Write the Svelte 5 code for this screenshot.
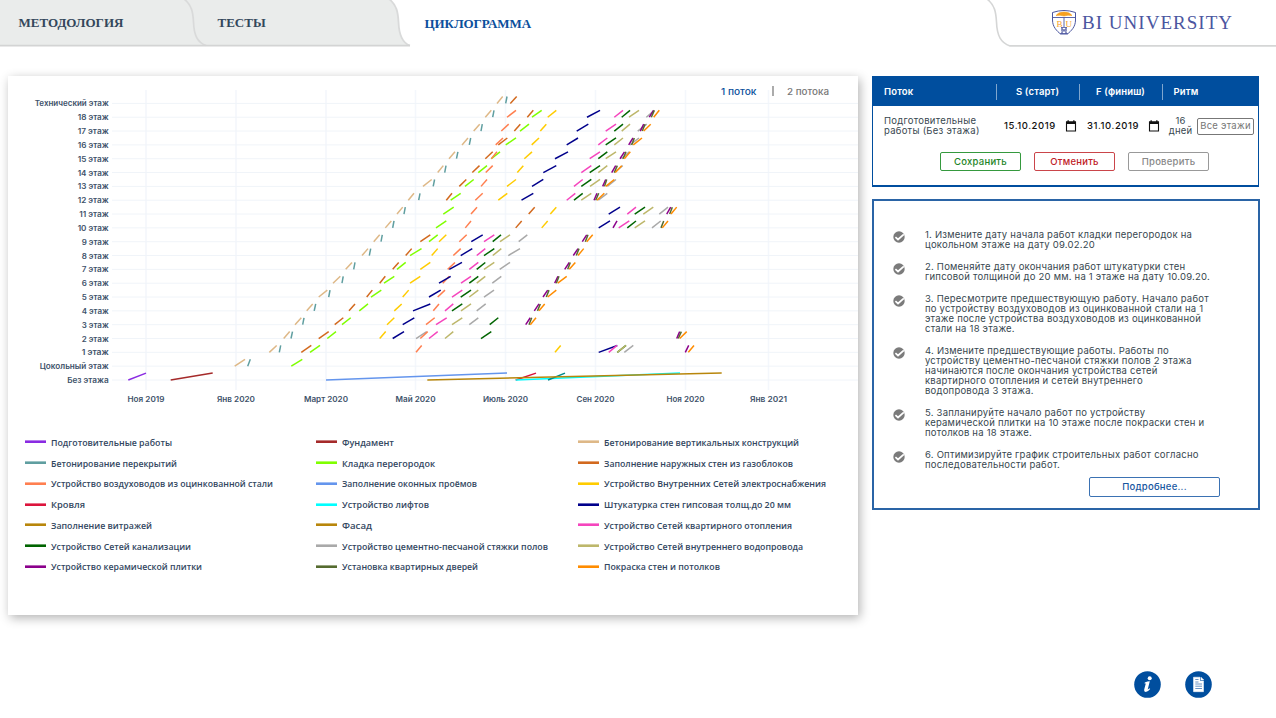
<script>
  const floors = ['Без этажа', 'Цокольный этаж', ...Array.from({ length: 18 }, (_, i) => `${i + 1} этаж`), 'Технический этаж'];
  const floorWidths = floors.map((f, i) => (i === 0 ? 41.5 : i === 1 ? 69 : i === 20 ? 74 : i < 11 ? 27 : i === 12 ? 29.5 : 31));
  const months = [
    ['Ноя 2019', 146], ['Янв 2020', 236], ['Март 2020', 326], ['Май 2020', 415.5],
    ['Июль 2020', 505.5], ['Сен 2020', 595.5], ['Ноя 2020', 685.5], ['Янв 2021', 768.5]
  ];
  const monthWidths = [37, 38, 44, 40, 45, 38, 38, 37];
  const rowY = (r) => 380 - r * 13.83;

  const series = [
    { color: '#8a2be2', s: [[0, 128.3, 146]] },
    { color: '#a52a2a', s: [[0, 170.7, 212.7]] },
    { color: '#deb887', s: [[1, 234.7, 245], [2, 269.3, 276.7], [3, 283.7, 289.7], [4, 295, 301.3], [5, 306.7, 312.7], [6, 318.7, 327.3], [7, 333, 340.3], [8, 345.7, 352], [9, 362, 368], [10, 373.7, 379.7], [11, 385.3, 391.3], [12, 397, 402.7], [13, 408.3, 414], [14, 423, 431.7], [15, 437.7, 443.3], [16, 449, 455], [17, 462, 468], [18, 473.7, 479.7], [19, 485.3, 491.3], [20, 497, 502.7]] },
    { color: '#5f9ea0', s: [[1, 247.7, 250.3], [2, 279.3, 280.7], [3, 291, 292.5], [4, 302.7, 304], [5, 314.2, 315.7], [6, 328.7, 330], [7, 342, 343.2], [8, 353.7, 355], [9, 369.3, 370.7], [10, 381, 382.3], [11, 392.7, 394], [12, 404, 405.3], [13, 418.7, 420], [14, 433.2, 434.6], [15, 444.7, 446], [16, 456.5, 457.9], [17, 469.3, 470.7], [18, 481, 482.3], [19, 492.7, 494], [20, 505.7, 507]] },
    { color: '#7fff00', s: [[1, 291.3, 302.3], [2, 310, 320], [3, 327.3, 336], [4, 342, 350.7], [5, 359.3, 368], [6, 371, 381.3], [7, 384, 394.3], [8, 397, 405.7], [9, 410, 421.5], [10, 429, 437.7], [11, 436, 446.3], [12, 443.3, 453.7], [13, 450.7, 460.7], [14, 465, 473.7], [15, 478.3, 487], [16, 491.3, 500], [17, 505.7, 516], [18, 520, 529], [19, 532, 541.7]] },
    { color: '#d2691e', s: [[2, 301.3, 311.3], [3, 318.7, 328.7], [4, 334.7, 343.3], [5, 349, 355], [6, 366.7, 372.3], [7, 379.7, 385.3], [8, 392.7, 398.7], [9, 405.7, 411.7], [10, 420.3, 430.3], [11, 515.7, 521.7], [12, 528.7, 534.7], [13, 446.3, 452], [14, 459.3, 466.3], [15, 472.3, 479.5], [16, 485.3, 492.7], [17, 498.3, 507.3], [18, 514.3, 520.3], [19, 527.3, 533.3], [20, 510.3, 516.7]] },
    { color: '#ff7f50', s: [[2, 416, 421.7], [4, 426, 434.7], [5, 433.3, 439], [6, 437.7, 445], [7, 442.7, 449.3], [8, 447.7, 455], [9, 453.3, 460.7], [10, 459.3, 466.7], [11, 465.3, 471], [12, 471, 477], [13, 475.3, 482.7], [14, 481, 487], [15, 485.7, 492.7], [16, 491.3, 497], [17, 495.7, 503], [18, 501.3, 508.7], [19, 507, 516]] },
    { color: '#6495ed', s: [[0, 326, 507]] },
    { color: '#ffcc00', s: [[2, 555, 560.7], [3, 379.7, 385.7], [4, 387, 394.3], [5, 394.3, 401.7], [6, 402.7, 408.7], [7, 410, 420.3], [8, 420.3, 430.3], [9, 431.7, 437.7], [10, 439, 446.3], [11, 541.7, 547.7], [12, 550.3, 556.3], [13, 498.3, 507.3], [14, 507, 516], [15, 517.3, 523.3], [16, 524.3, 532], [17, 531.7, 539], [18, 540.3, 546.3], [19, 547.7, 556.3]] },
    { color: '#dc143c', s: [[0, 515.7, 536]] },
    { color: '#00ffff', s: [[0, 515.7, 680]] },
    { color: '#00008b', s: [[2, 598.7, 617.3], [3, 392.7, 404], [4, 402.7, 414.3], [5, 413, 430.3], [6, 429, 440.7], [7, 439, 450.7], [8, 449.3, 462], [9, 460.7, 472.3], [10, 471.3, 482.7], [11, 598.7, 610], [12, 608.7, 620], [13, 521.5, 533.3], [14, 532, 543.3], [15, 543.3, 556.3], [16, 555, 568], [17, 566.7, 578], [18, 576.7, 588.3], [19, 587, 600]] },
    { color: '#008b8b', s: [[0, 548, 565]] },
    { color: '#b8860b', s: [[0, 427.3, 721.7]] },
    { color: '#f545bd', s: [[2, 608.7, 617], [3, 429, 437.7], [4, 436, 446.7], [5, 445, 453.3], [6, 452, 462.3], [7, 461, 471], [8, 469.3, 478.3], [9, 476.7, 485.3], [10, 484, 494.3], [11, 618.7, 629.3], [12, 627.3, 636], [13, 566.7, 575.3], [14, 574, 582.7], [15, 581.3, 591.3], [16, 589.7, 600], [17, 598.3, 607.3], [18, 605.7, 616], [19, 614.3, 623]] },
    { color: '#006400', s: [[2, 617.3, 626], [3, 481, 491.3], [4, 489.7, 498.3], [5, 452, 462.3], [6, 460.7, 471], [7, 469.3, 478.3], [8, 476.7, 485.3], [9, 484, 494.3], [10, 492.7, 501], [11, 627.3, 636], [12, 634.7, 645], [13, 574, 582.7], [14, 581.3, 591.3], [15, 589.7, 600], [16, 598.3, 607.3], [17, 605.7, 616], [18, 614.3, 623], [19, 621.7, 630]] },
    { color: '#a9a9a9', s: [[2, 624.3, 633.3], [3, 416, 426.7], [4, 469.3, 478.3], [5, 476.7, 485.7], [6, 484, 494], [7, 492.3, 501.3], [8, 499.7, 510], [9, 508.3, 520], [10, 518.7, 527.3], [11, 652, 660.7], [12, 659.3, 668], [13, 598.3, 607.3], [14, 607.3, 616], [15, 614.3, 622.7], [16, 621.7, 629.3], [17, 630, 639], [18, 637.7, 646.7], [19, 646.3, 654.3]] },
    { color: '#ff7f50', s: [[3, 420.3, 427.7]] },
    { color: '#bdb76b', s: [[2, 617.3, 626], [3, 445, 453.3], [4, 452, 462.3], [5, 461, 471], [6, 469.3, 478.3], [7, 476.7, 485.3], [8, 484, 494.3], [9, 492.7, 501.3], [10, 500, 510], [11, 634.7, 645], [12, 643.3, 653.3], [13, 581.3, 591.3], [14, 590, 600], [15, 598.3, 607.3], [16, 605.7, 616], [17, 614.3, 623], [18, 621.7, 630], [19, 629, 639]] },
    { color: '#8b008b', s: [[2, 685.3, 688.7], [3, 676.7, 679.7], [4, 525.7, 530.3], [5, 534.3, 539], [6, 543, 547.7], [7, 554.7, 558], [8, 564.7, 569.3], [9, 573.3, 578], [10, 582.3, 586.7], [11, 613, 617], [12, 666.7, 670.7], [13, 594, 597], [14, 602.7, 605.7], [15, 611.7, 615.7], [16, 620, 624.5], [17, 628.7, 633], [18, 640.3, 643.7], [19, 649.3, 653.5]] },
    { color: '#556b2f', s: [[3, 678.3, 681.3], [4, 529, 531.7], [5, 537.5, 540.3], [6, 546.3, 549], [7, 556.3, 559], [8, 567.7, 570.3], [9, 576.3, 579], [10, 585.3, 588], [11, 661, 663.7], [12, 669.7, 672.3], [13, 595.7, 598.7], [14, 604.5, 606.7], [15, 614.3, 617.3], [16, 623, 626], [17, 631.7, 634.3], [18, 642.3, 645], [19, 651.3, 654.3]] },
    { color: '#ff8c00', s: [[2, 688.3, 694], [3, 679.7, 686.7], [4, 530.3, 536], [5, 539, 544.7], [6, 547.7, 556.3], [7, 557.7, 566.7], [8, 569.3, 575.3], [9, 578, 583.7], [10, 586.7, 592.7], [11, 662.3, 668], [12, 671, 676.7], [13, 597, 604.3], [14, 605.7, 614.3], [15, 615.3, 621.7], [16, 624.3, 630.3], [17, 633.3, 642], [18, 643.7, 650.7], [19, 653.7, 659.3]] }
  ];

  const legend = [
    ['Подготовительные работы', '#8a2be2', 121], ['Фундамент', '#a52a2a', 52], ['Бетонирование вертикальных конструкций', '#deb887', 195],
    ['Бетонирование перекрытий', '#5f9ea0', 126], ['Кладка перегородок', '#7fff00', 93], ['Заполнение наружных стен из газоблоков', '#d2691e', 189],
    ['Устройство воздуховодов из оцинкованной стали', '#ff7f50', 222], ['Заполнение оконных проёмов', '#6495ed', 135], ['Устройство Внутренних Сетей электроснабжения', '#ffcc00', 222],
    ['Кровля', '#dc143c', 34], ['Устройство лифтов', '#00ffff', 87], ['Штукатурка стен гипсовая толщ.до 20 мм', '#00008b', 187],
    ['Заполнение витражей', '#b8860b', 101], ['Фасад', '#b8860b', 30], ['Устройство Сетей квартирного отопления', '#f545bd', 188],
    ['Устройство Сетей канализации', '#006400', 140], ['Устройство цементно-песчаной стяжки полов', '#a9a9a9', 206], ['Устройство Сетей внутреннего водопровода', '#bdb76b', 199],
    ['Устройство керамической плитки', '#8b008b', 151], ['Установка квартирных дверей', '#556b2f', 136], ['Покраска стен и потолков', '#ff8c00', 116]
  ];

  const tasks = [
    ['1. Измените дату начала работ кладки перегородок на', 'цокольном этаже на дату 09.02.20'],
    ['2. Поменяйте дату окончания работ штукатурки стен', 'гипсовой толщиной до 20 мм. на 1 этаже на дату 10.09.20.'],
    ['3. Пересмотрите предшествующую работу. Начало работ', 'по устройству воздуховодов из оцинкованной стали на 1', 'этаже после устройства воздуховодов из оцинкованной', 'стали на 18 этаже.'],
    ['4. Измените предшествующие работы. Работы по', 'устройству цементно-песчаной стяжки полов 2 этажа', 'начинаются после окончания устройства сетей', 'квартирного отопления и сетей внутреннего', 'водопровода 3 этажа.'],
    ['5. Запланируйте начало работ по устройству', 'керамической плитки на 10 этаже после покраски стен и', 'потолков на 18 этаже.'],
    ['6. Оптимизируйте график строительных работ согласно', 'последовательности работ.']
  ];
</script>

{#snippet calendar()}
  <svg class="cal" width="12" height="12" viewBox="0 0 12 12"><path d="M1.5 2h9v9h-9z" fill="none" stroke="#111" stroke-width="1.1" /><path d="M1 1.5h10v2.6H1zM2.5.3h1.3v2H2.5zM8.2.3h1.3v2H8.2z" fill="#111" /></svg>
{/snippet}

<div class="page">
  <header>
    <svg width="1276" height="48" viewBox="0 0 1276 48">
      <path d="M0 0H389C397 5 398 13 398.500 22C399 35 402 43 410 45.500H0Z" fill="#eaeceb" />
      <path d="M171 -1C179 5 180 13 180.500 22C181 35 184 42 193 45.500" transform="translate(13)" fill="none" stroke="#d9dada" stroke-width="1.7" />
      <path d="M389 -1C397 5 398 13 398.500 22C399 35 402 43 410 45.500" fill="none" stroke="#d9dada" stroke-width="1.8" />
      <path d="M0 45.600H410" stroke="#d3d4d4" stroke-width="1.6" />
      <path d="M987 -1C995 5 996 13 996.500 22C997 36 1001 43 1010 45.900H1276" fill="none" stroke="#d5d6d6" stroke-width="1.6" />
    </svg>
    <nav>
      <span class="tab first">МЕТОДОЛОГИЯ</span>
      <span class="tab second">ТЕСТЫ</span>
      <span class="tab active">ЦИКЛОГРАММА</span>
    </nav>
    <svg class="logo" width="184" height="28" viewBox="0 0 184 28">
      <path d="M1.500 3.500Q13 -.5 24.500 3.500V11C24.500 18 20 22 16.500 25H9.500C6 22 1.500 18 1.500 11Z" fill="#fff" stroke="#4b56a0" stroke-width="1" />
      <path d="M5 6.500Q7 3 13 3Q19 3 21 6.500L17 6.200L13 7L9 6.200Z" fill="#f6a01f" stroke="#f6a01f" stroke-width=".6" />
      <path d="M2 8.500H24M13 8.500V18" stroke="#4b56a0" stroke-width=".9" />
      <text x="5.500" y="17.500" class="crest">B</text><text x="14.500" y="17.500" class="crest">U</text>
      <path d="M10 18.500H16M10 21H16M9 24.500H17M11 18V25M15 18V25M10.500 19L15.500 24M15.500 19L10.500 24" stroke="#4b56a0" stroke-width=".8" />
      <text x="31" y="20" class="brand" textLength="150">BI UNIVERSITY</text>
    </svg>
  </header>

  <main>
    <section class="chart">
      <svg class="plot" width="850" height="336" viewBox="8 76 850 336">
        {#each months as [label, x], i}
          <path d={`M${x} 90V390`} stroke="#f4f7fc" stroke-width="1.6" />
          <text {x} y="401.500" text-anchor="middle" class="axis" textLength={monthWidths[i]} lengthAdjust="spacingAndGlyphs">{label}</text>
        {/each}
        {#each floors as label, r}
          <path d={`M112 ${rowY(r)}H858`} stroke="#f0f4f9" stroke-width="1" />
          <text x="108.700" y={rowY(r) + 3} text-anchor="end" class="axis" textLength={floorWidths[r]} lengthAdjust="spacingAndGlyphs">{label}</text>
        {/each}
        {#each series as item}
          {#each item.s as [r, a, b]}
            <path d={`M${a} ${rowY(r)}L${b} ${rowY(r) - 6.9}`} stroke={item.color} stroke-width="1.5" />
          {/each}
        {/each}
        <text x="721" y="94.500" class="flow on" textLength="35.500" lengthAdjust="spacingAndGlyphs">1 поток</text>
        <path d="M773 86V96" stroke="#888" stroke-width="1.4" />
        <text x="787" y="94.500" class="flow" textLength="42" lengthAdjust="spacingAndGlyphs">2 потока</text>
      </svg>
      <div class="legend">
        {#each legend as [name, color, w]}
          <div class="entry">
            <svg width="21" height="3"><rect width="21" height="2.600" y=".4" fill={color} /></svg>
            <svg class="label" width={w + 12} height="18"><text x="0" y="12.500" textLength={w} lengthAdjust="spacingAndGlyphs">{name}</text></svg>
          </div>
        {/each}
      </div>
    </section>

    <aside>
      <section class="stream">
        <div class="head">
          <span>Поток</span><span>S (старт)</span><span>F (финиш)</span><span>Ритм</span>
        </div>
        <div class="row">
          <span class="name">Подготовительные<br />работы (Без этажа)</span>
          <span class="date">15.10.2019</span>{@render calendar()}
          <span class="date second-date">31.10.2019</span>{@render calendar()}
          <span class="rhythm">16<br />дней</span>
          <button class="all">Все этажи</button>
        </div>
        <div class="actions">
          <button class="save">Сохранить</button>
          <button class="cancel">Отменить</button>
          <button class="check">Проверить</button>
        </div>
      </section>

      <section class="tasks">
        {#each tasks as lines}
          <div class="task">
            <svg width="12" height="12" viewBox="0 0 12 12"><circle cx="6" cy="6" r="5.700" fill="#7b7b7b" /><path d="M2.400 6.200L5 8.500L10.800 3.300" fill="none" stroke="#fff" stroke-width="1.7" /></svg>
            <p>{#each lines as line}<span>{line}</span>{/each}</p>
          </div>
        {/each}
        <button class="more">Подробнее...</button>
      </section>
    </aside>
  </main>

  <footer>
    <svg width="27" height="27" viewBox="0 0 27 27"><circle cx="13.500" cy="13.500" r="13.300" fill="#004e9e" /><circle cx="15.700" cy="7.300" r="2" fill="#fff" /><path d="M10.800 11.500Q13.500 10.300 15.800 10.300L13.700 18.400Q14.300 18.500 15.400 17.300L16.200 18Q13.700 21 11.700 21Q9.600 20.700 10.200 18.400L11.800 12.500H10.500Z" fill="#fff" /></svg>
    <svg width="27" height="27" viewBox="0 0 27 27"><circle cx="13.500" cy="13.500" r="13.300" fill="#004e9e" /><path d="M8.500 6.200H15V10H18.500V20.700H8.500ZM16 6.200L18.800 9H16Z" fill="#fff" stroke="#fff" stroke-width=".5" /><path d="M10.300 8.500H13.500M10.300 11H13.500M10.300 13H17M10.300 15.200H17M10.300 17.500H17" stroke="#5988bd" stroke-width=".9" /></svg>
  </footer>
</div>

<style>
  :global(body) { background: #fff; overflow: hidden; }
  .page { width: 1276px; height: 718px; display: flex; flex-direction: column; overflow: hidden; font-family: Inter, Roboto, sans-serif; box-sizing: border-box; }
  header { height: 48px; flex: none; display: grid; align-items: start; }
  header > * { grid-area: 1 / 1; }
  nav { display: flex; padding-left: 18.500px; padding-top: 15px; font: bold 13px/15px "Liberation Serif", serif; color: #33475b; }
  .tab { white-space: nowrap; }
  .first { width: 199px; }
  .second { width: 207px; }
  .active { color: #0b4f9c; padding-top: 1px; letter-spacing: -.08px; }
  .logo { justify-self: end; margin-top: 9px; margin-right: 41px; }
  .brand { font: 19px "Liberation Serif", serif; fill: #4b56a0; }
  .crest { font: 9px "Liberation Serif", serif; fill: #f6a01f; }
  main { display: flex; gap: 14px; padding: 28px 16px 0 8px; align-items: flex-start; height: 567px; flex: none; box-sizing: border-box; }
  .chart { width: 850px; height: 539px; flex: none; box-shadow: 2px 3px 10px rgba(0, 0, 0, .3); background: #fff; }
  .plot { display: block; }
  .axis { font-size: 7.600px; font-weight: 600; fill: #40526a; }
  .flow { font-size: 9.200px; font-weight: 500; fill: #777; }
  .on { fill: #0b4f9c; }
  .legend { display: grid; grid-template-columns: 290.500px 262.500px 270px; grid-auto-rows: 20.750px; padding: 19.500px 0 0 17px; }
  .entry { display: flex; align-items: center; gap: 5px; }
  .entry svg { flex: none; }
  .label { overflow: visible; }
  .entry text { font: 600 9px "Open Sans", sans-serif; fill: #33475f; }
  aside { width: 388px; display: flex; flex-direction: column; gap: 12px; color: #37474f; }
  section { box-sizing: border-box; }
  .stream { width: 387px; height: 110.500px; border: 1px solid #004e9e; border-bottom-width: 2px; }
  .head { height: 29px; background: #004e9e; color: #fff; display: grid; grid-template-columns: 111.500px 83px 83px 80px; align-items: center; padding-left: 11px; font-size: 9.500px; font-weight: 600; letter-spacing: .15px; }
  .head span + span { border-left: 1px solid #7fa6ce; height: 16px; line-height: 16px; text-align: center; }
  .head span:last-child { text-align: left; padding-left: 11px; }
  .row { display: flex; align-items: center; height: 40px; padding-left: 11px; font-size: 9.500px; line-height: 10px; white-space: nowrap; }
  .name { width: 120px; letter-spacing: .26px; }
  .date { width: 61px; color: #111; letter-spacing: .55px; font-weight: 500; }
  .second-date { margin-left: 10px; }
  .cal { flex: none; }
  .rhythm { text-align: center; width: 25px; margin: 0 4px 0 8px; letter-spacing: .15px; }
  button { box-sizing: border-box; background: #fff; border: 1px solid; border-radius: 2px; padding: 0; font: 500 9.500px/16px Inter, Roboto, sans-serif; letter-spacing: .25px; white-space: nowrap; }
  .all { width: 57px; height: 17px; line-height: 14px; color: #777; flex: none; font-weight: 400; }
  .actions { display: flex; gap: 13px; padding: 6px 0 0 67px; }
  .actions button { width: 81px; height: 19px; }
  .save { color: #1e8428; border-color: #35993e; }
  .cancel { color: #c02026; border-color: #ca454a; }
  .check { color: #888; border-color: #999; }
  .tasks { width: 388px; height: 311.500px; border: 2px solid #3f74ae; border-color: #2a64a6; padding: 29px 20px 0 19px; display: flex; flex-direction: column; gap: 12px; }
  .task { display: flex; gap: 20px; align-items: flex-start; }
  .task svg { margin-top: 1px; flex: none; }
  p { margin: 0; font-size: 9.500px; line-height: 10px; letter-spacing: .22px; }
  p span { display: block; white-space: nowrap; }
  .more { width: 131px; height: 20px; align-self: flex-end; margin: -5px 18px 0 0; color: #17569f; border-color: #3b72b3; flex: none; }
  footer { display: flex; justify-content: flex-end; gap: 24px; padding: 56px 64px 0 0; }
</style>
